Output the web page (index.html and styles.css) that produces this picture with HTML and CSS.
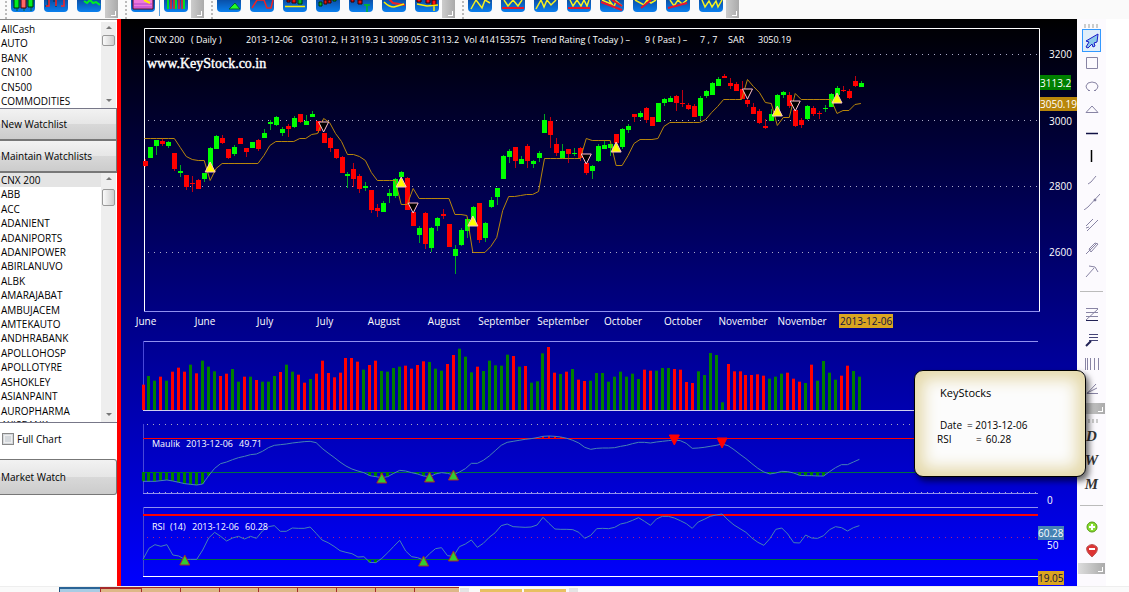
FILE: index.html
```html
<!DOCTYPE html>
<html lang="en">
<head>
    <meta charset="UTF-8">
    <meta name="viewport" content="width=device-width, initial-scale=1.0">
    <title>KeyStocks</title>
    <link rel="stylesheet" href="styles.css">
</head>
<body>
    <!-- Top toolbar -->
    <header class="toolbar">
        <div class="tool-group first">
            <button class="tool" aria-label="Candles"><svg viewBox="0 12 24 12"><path d="M6 12v11M13 12v11M20 12v11" stroke="#063"/><path fill="#0e2" stroke="#030" d="M3 11h5v9H3zM17 11h5v8h-5z"/><path fill="#f66" stroke="#400" d="M10 11h5v9h-5z"/></svg></button>
            <button class="tool" aria-label="Bars"><svg viewBox="0 12 24 12"><path d="M4 12v6M1 18h3M12 12v7M12 13h-3" stroke="#034" fill="none"/><path d="M5 12v6h-3M12 12v6M20 12v6h-3" stroke="#f22" stroke-width="1.500" fill="none"/></svg></button>
            <button class="tool" aria-label="Line"><svg viewBox="0 12 24 12"><path d="M7 13l3 2 3-3 3 3 3-1 4 3" stroke="#0e2" stroke-width="2" fill="none"/></svg></button>
        </div>
        <span class="overflow"></span>
        <div class="tool-group">
            <button class="tool" aria-label="Template"><svg viewBox="0 12 24 12"><path fill="#e7d" stroke="#502" d="M2 11h20v10H2z"/><path d="M3 16h18M3 19h18" stroke="#a4c"/><path d="M13 12l6 3" stroke="#fe0" stroke-width="2"/></svg></button>
            <span class="divider"></span>
            <button class="tool" aria-label="Volume"><svg viewBox="0 12 24 12"><path d="M4 12v9M12 12v9M20 12v9" stroke="#0d2" stroke-width="2"/><path d="M7 12v9M10 12v9M15 12v9M18 12v9" stroke="#e22" stroke-width="1.500"/></svg></button>
        </div>
        <span class="overflow"></span>
        <div class="tool-group">
            <button class="tool" aria-label="Up signal"><svg viewBox="0 12 24 12"><path fill="#2f2" stroke="#063" d="M12 21l6-6 5 6z"/></svg></button>
            <button class="tool" aria-label="Zigzag"><svg viewBox="0 12 24 12"><path d="M2 20l5-8h7l3 8h4l2-8" stroke="#e22" stroke-width="1.500" fill="none"/></svg></button>
            <button class="tool" aria-label="Support"><svg viewBox="0 12 24 12"><path fill="#d11" stroke="#300" d="M4 12h3v2H4zM9 11h4v4H9z"/><path fill="#0b2" stroke="#030" d="M15 11h4v5h-4z"/><path d="M2 18.500h20" stroke="#fe0" stroke-width="1.500"/></svg></button>
            <button class="tool" aria-label="Pattern"><svg viewBox="0 12 24 12"><path fill="#0b2" stroke="#030" d="M3 14h3v4H3zM17 11h3v2h-3z"/><path fill="#d11" stroke="#300" d="M8 12h3v4H8zM12 12h3v3h-3z"/></svg></button>
            <button class="tool" aria-label="Breakout"><svg viewBox="0 12 24 12"><path fill="#d11" stroke="#300" d="M2 11h3v3H2zM9 12h4v4H9z"/><path d="M15 17h6M18 16v8" stroke="#0b2" stroke-width="1.500"/></svg></button>
            <button class="tool" aria-label="Cup"><svg viewBox="0 12 24 12"><path d="M7 11l4 4 12 2" stroke="#e22" stroke-width="2" fill="none"/><path d="M2 14q5 5 10 5l10-3" stroke="#fe0" stroke-width="1.500" fill="none"/></svg></button>
            <button class="tool" aria-label="Handle"><svg viewBox="0 12 24 12"><path fill="#f11" stroke="#300" d="M2 11h4v3H2zM11 11h4v4h-4zM17 12h4v5h-4z"/><path d="M2 16l10 2 11-1M19 17v6" stroke="#fe0" stroke-width="1.500" fill="none"/></svg></button>
        </div>
        <span class="overflow"></span>
        <div class="tool-group">
            <button class="tool" aria-label="Wave"><svg viewBox="0 12 24 12"><path d="M3 21l5-9 6 8 3-8 5 3" class="wave"/></svg></button>
            <button class="tool" aria-label="Wave base"><svg viewBox="0 12 24 12"><path d="M3 12l4 6 5-6 5 6 4-6" class="wave"/><path d="M1 20h22" class="trend"/></svg></button>
            <button class="tool" aria-label="Double wave"><svg viewBox="0 12 24 12"><path d="M2 21l5-9 3 7 3-7 4 5 5-5" class="wave"/></svg></button>
            <button class="tool" aria-label="Triple base"><svg viewBox="0 12 24 12"><path d="M3 12l3 6 4-6 4 6 3-6 3 6 2-6" class="wave"/><path d="M1 20h22" class="trend"/></svg></button>
            <button class="tool" aria-label="Down channel"><svg viewBox="0 12 24 12"><path d="M2 12l9 4M9 12l5 7 2-6 6 5" class="wave"/><path d="M1 14l21 8M12 12l10 6" class="trend"/></svg></button>
            <button class="tool" aria-label="Up channel"><svg viewBox="0 12 24 12"><path d="M2 12l9 5 3-5 4 3 5-3" class="wave"/><path d="M8 20l10-8" class="trend"/></svg></button>
            <button class="tool" aria-label="Rising wedge"><svg viewBox="0 12 24 12"><path d="M4 12l4 6 4-6 4 4 5-4" class="wave"/><path d="M2 20l19-5" class="trend"/></svg></button>
            <button class="tool" aria-label="Cycle"><svg viewBox="0 12 24 12"><path d="M3 12l3 7 4-6 3 6 4-6 2 6 4-7" class="wave"/></svg></button>
        </div>
        <span class="overflow"></span>
    </header>

    <main class="workspace">
        <!-- Watchlists -->
        <aside class="sidebar">
            <div class="listbox short">
                <ul>
                    <li>AllCash</li><li>AUTO</li><li>BANK</li><li>CN100</li><li>CN500</li><li>COMMODITIES</li>
                </ul>
                <div class="scroll"><span class="up"></span><span class="thumb"></span><span class="down"></span></div>
            </div>
            <button class="side-btn">New Watchlist</button>
            <button class="side-btn">Maintain Watchlists</button>
            <div class="listbox tall">
                <ul>
                    <li class="selected">CNX 200</li><li>ABB</li><li>ACC</li><li>ADANIENT</li><li>ADANIPORTS</li><li>ADANIPOWER</li>
                    <li>ABIRLANUVO</li><li>ALBK</li><li>AMARAJABAT</li><li>AMBUJACEM</li><li>AMTEKAUTO</li><li>ANDHRABANK</li>
                    <li>APOLLOHOSP</li><li>APOLLOTYRE</li><li>ASHOKLEY</li><li>ASIANPAINT</li><li>AUROPHARMA</li><li>AXISBANK</li>
                </ul>
                <div class="scroll"><span class="up"></span><span class="thumb"></span><span class="down"></span></div>
            </div>
            <label class="full-chart"><input type="checkbox"> Full Chart</label>
            <button class="side-btn market">Market Watch</button>
        </aside>

        <!-- Chart -->
        <section class="chart-area">
            <svg id="chart" class="chart" viewBox="121 19 956 567" role="img" aria-label="CNX 200 daily chart">
                <g class="grid">
                    <path d="M148 54.500H1038M148 120.500H1038M148 186.500H1038M148 252.500H1038"/>
                    <path d="M147 424.500H1038M147 492.500H1038"/>
                    <path class="mid" d="M147 537.500H1038"/>
                </g>
                <path class="frame" d="M144.500 311.500V28.500H1039.500V311.500"/>
                <path class="edge" d="M144 311.500H1040M143 341.500H1038M143 493.500H1038M143 507.500H1038"/>
                <path class="side" d="M143.500 341V410M143.500 424V493M143.500 507V576"/>
                <path class="base" d="M143 410.500H1038"/>
                <path class="frame" d="M143 576.500H1038"/>
                <path class="low" d="M143 472.500H1038M143 559.500H1038"/>
                <path class="high" d="M143 438.500H1038"/>
                <path class="high thick" d="M143 515H1038"/>
                <g id="plot"></g>

                <g class="info">
                    <text x="149" y="43">CNX 200</text>
                    <text x="191" y="43">( Daily )</text>
                    <text x="246" y="43">2013-12-06</text>
                    <text x="301" y="43">O3101.2,</text>
                    <text x="341" y="43">H 3119.3</text>
                    <text x="381" y="43">L 3099.05</text>
                    <text x="423" y="43">C 3113.2</text>
                    <text x="464" y="43">Vol 414153575</text>
                    <text x="532" y="43">Trend Rating ( Today ) –</text>
                    <text x="645" y="43">9 ( Past ) –</text>
                    <text x="700" y="43">7 , 7</text>
                    <text x="728" y="43">SAR</text>
                    <text x="758" y="43">3050.19</text>
                    <text x="152" y="447">Maulik</text>
                    <text x="186" y="447">2013-12-06</text>
                    <text x="239" y="447">49.71</text>
                    <text x="152" y="530">RSI</text>
                    <text x="170" y="530">(14)</text>
                    <text x="192" y="530">2013-12-06</text>
                    <text x="245" y="530">60.28</text>
                </g>
                <text class="site" x="147" y="68">www.KeyStock.co.in</text>

                <g id="months" class="axis months"></g>
                <rect x="839" y="314" width="54" height="14" fill="#daa520"/>
                <text class="axis dark" x="840" y="325">2013-12-06</text>

                <g class="axis">
                    <text x="1049" y="58">3200</text>
                    <text x="1049" y="125">3000</text>
                    <text x="1049" y="190">2800</text>
                    <text x="1049" y="256">2600</text>
                    <text x="1047" y="504">0</text>
                    <text x="1047" y="549">50</text>
                </g>
                <rect x="1040" y="75" width="31" height="15" fill="#008000"/>
                <text class="axis" x="1040" y="87">3113.2</text>
                <rect x="1040" y="97" width="37" height="14" fill="#b8860b"/>
                <text class="axis" x="1040" y="108">3050.19</text>
                <rect x="1038" y="526" width="26" height="14" fill="#4682b4"/>
                <text class="axis" x="1038" y="537">60.28</text>
                <rect x="1038" y="571" width="26" height="14" fill="#daa520"/>
                <text class="axis dark" x="1038" y="582">19.05</text>
            </svg>
        </section>

        <!-- Drawing tools -->
        <nav class="draw-tools" aria-label="Drawing tools">
            <span class="grip"></span>
            <button class="draw active" aria-label="Select"><svg viewBox="0 0 16 16"><path fill="#8ac8ea" stroke="#1a1ac8" d="M14 1L2 8l3 1-3 5 2 1 4-4 1 3 2-1-1-3 3-1z"/></svg></button>
            <button class="draw" aria-label="Rectangle"><svg viewBox="0 0 16 16"><path d="M2.500 1.500h11v11h-11z"/></svg></button>
            <button class="draw" aria-label="Ellipse"><svg viewBox="0 0 16 16"><path d="M5 11.500Q2 10 2 7q1-4 6-4t6 4q0 3-3 4.500M4 11.500h2M10 11.500h2"/></svg></button>
            <button class="draw" aria-label="Triangle"><svg viewBox="0 0 16 16"><path d="M2 10.500h12L8 4z"/></svg></button>
            <button class="draw" aria-label="Horizontal line"><svg viewBox="0 0 16 16"><path stroke="#114" stroke-width="1.500" d="M2 8.500h12"/></svg></button>
            <button class="draw" aria-label="Vertical line"><svg viewBox="0 0 16 16"><path stroke="#000" stroke-width="1.500" d="M7.500 2v12"/></svg></button>
            <button class="draw" aria-label="Segment"><svg viewBox="0 0 16 16"><path d="M4 13l3-2 5-6"/></svg></button>
            <button class="draw" aria-label="Trend line"><svg viewBox="0 0 16 16"><path d="M0 16l4-3L16 0"/><circle cx="11" cy="6" r="1" fill="#446"/></svg></button>
            <button class="draw" aria-label="Parallel lines"><svg viewBox="0 0 16 16"><path d="M2 9l7-7M3 14L14 3M2 11l3-1"/></svg></button>
            <button class="draw" aria-label="Channel"><svg viewBox="0 0 16 16"><path d="M2 14L13 3M5 9l6-6M7 12l7-8M5 9l2 3M11 3l3 1"/></svg></button>
            <button class="draw" aria-label="Pitchfork"><svg viewBox="0 0 16 16"><path d="M2 14l8-9M5 3l6 1 3 5"/></svg></button>
            <hr>
            <button class="draw wide" aria-label="Retracement"><svg viewBox="0 0 16 16"><path d="M2 2.500h12M2 6.500h12M2 10.500h12M2 14L14 3"/><path stroke="#225" d="M2 14.500h12"/></svg></button>
            <button class="draw wide" aria-label="Fan levels"><svg viewBox="0 0 16 16"><path stroke="#447" d="M5 3.500h9M5 6.500h9M5 9.500h9"/><path stroke="#225" stroke-width="2" d="M2 15l5-5"/></svg></button>
            <button class="draw wide" aria-label="Time zones"><svg viewBox="0 0 16 16"><path d="M1.500 2v12M3.500 2v12M6.500 2v12M10.500 2v12M14.500 2v12"/></svg></button>
            <button class="draw wide" aria-label="Gann fan"><svg viewBox="0 0 16 16"><path d="M14 12.500H3L12 3M3 12l10-5"/></svg></button>
            <span class="overflow flat"></span>
            <span class="grip"></span>
            <button class="draw period">D</button>
            <button class="draw period">W</button>
            <button class="draw period">M</button>
            <hr>
            <button class="draw" aria-label="Zoom in"><svg viewBox="0 0 16 16"><circle cx="8" cy="8" r="5" fill="#8d3" stroke="#591"/><path stroke="#fff" stroke-width="2" d="M5 8h6M8 5v6"/></svg></button>
            <button class="draw" aria-label="Zoom out"><svg viewBox="0 0 16 16"><path fill="#d33" stroke="#b55" d="M3 5q5-5 10 0 2 4-5 10Q1 9 3 5z"/><path stroke="#fff" stroke-width="2" d="M5 7h6"/></svg></button>
            <span class="overflow flat"></span>
        </nav>

        <div class="tooltip">
            <h2>KeyStocks</h2>
            <dl>
                <dt>Date</dt><dd>= 2013-12-06</dd>
                <dt class="rsi">RSI</dt><dd><span>=</span>60.28</dd>
            </dl>
        </div>
    </main>

    <!-- Bottom tabs -->
    <footer class="tabs">
        <span class="tab blue"></span>
        <span class="tab current"></span>
        <span class="tab"></span>
        <span class="tab"></span>
        <span class="tab"></span>
        <span class="tab"></span>
        <span class="tab"></span>
        <span class="tab"></span>
        <span class="tab"></span>
        <span class="tab last"></span>
        <span class="stub"></span>
        <span class="gold"></span>
        <span class="gold"></span>
        <span class="stub"></span>
    </footer>

    <script src="script.js"></script>
</body>
</html>
```
FILE: styles.css
```css
* {
    margin: 0;
    padding: 0;
    box-sizing: border-box;
}

body {
    font-family: "Open Sans", "Noto Sans", sans-serif;
    font-size: 10px;
    color: #000;
    background: #fff;
    min-height: 100vh;
    display: flex;
    flex-direction: column;
    overflow: hidden;
}

button {
    font: inherit;
    border: none;
    background: none;
    cursor: pointer;
}

/* Top toolbar */
.toolbar {
    height: 19px;
    display: flex;
    background: #fafafa;
}

.tool-group {
    display: flex;
    gap: 9px;
    padding: 0 3px 0 11px;
    background: radial-gradient(#bbb 1px, transparent 1px) 4px 0 / 4px 4px repeat-y;
}

.tool {
    width: 24px;
    height: 12px;
    border-radius: 0 0 4px 4px;
    background: linear-gradient(#0a50a8, #0a80ee);
    overflow: hidden;
}

.tool svg {
    display: block;
    width: 24px;
    height: 12px;
}

.divider {
    width: 1px;
    height: 16px;
    margin: 0 -5px;
    background: #58a0e0;
}

.wave {
    fill: none;
    stroke: #f4f020;
    stroke-width: 1.5;
}

.trend {
    fill: none;
    stroke: #e8142c;
    stroke-width: 2;
}

.overflow {
    width: 13px;
    height: 18px;
    margin-right: 2px;
    background: linear-gradient(90deg, #ccc, #aaa);
    position: relative;
}

.overflow::after {
    content: "";
    position: absolute;
    right: 2px;
    bottom: 2px;
    width: 4px;
    height: 4px;
    border-right: 1px solid #fff;
    border-bottom: 1px solid #fff;
}

.tool-group.first + .overflow {
    margin-left: 1px;
}

/* Workspace */
.workspace {
    display: flex;
    position: relative;
    padding-right: 23px;
}

.sidebar {
    flex: none;
    width: 121px;
    border-right: 4px solid #f00;
    display: flex;
    flex-direction: column;
}

.listbox {
    display: flex;
    justify-content: space-between;
    overflow: hidden;
    border-bottom: 1px solid #778;
}

.listbox.short {
    height: 90px;
    padding-top: 2px;
    border-top: 1px solid #888;
}

.listbox.tall {
    height: 250px;
}

.listbox ul {
    list-style: none;
    flex: 1;
    display: flex;
    flex-direction: column;
    justify-content: space-between;
}

.short ul {
    height: 86px;
}

.tall ul {
    height: 259px;
}

.listbox li {
    line-height: 14px;
    padding-left: 1px;
}

.listbox li.selected {
    background: #e4e4e4;
}

.scroll {
    width: 15px;
    margin-right: 1px;
    background: #eee;
    display: flex;
    flex-direction: column;
    align-items: center;
}

.up,
.down {
    border: 3px solid transparent;
}

.up {
    border-top: none;
    border-bottom-color: #777;
    margin: 4px 0 6px;
}

.down {
    border-bottom: none;
    border-top-color: #777;
    margin: auto 0 6px;
}

.thumb {
    width: 13px;
    height: 11px;
    border: 1px solid #999;
    border-radius: 2px;
    background: linear-gradient(90deg, #fafafa, #ccc);
}

.tall .thumb {
    height: 17px;
    margin-top: 3px;
}

.side-btn {
    height: 32px;
    padding: 0 1px;
    text-align: left;
    border: 1px solid #777;
    border-width: 0 1px 2px 0;
    background: linear-gradient(#f2f2f2, #e6e6e6 50%, #d8d8d8 51%, #ccc);
}

.market {
    height: 36px;
    border-width: 1px 1px 1px 0;
    border-radius: 0 3px 3px 0;
}

.full-chart {
    height: 36px;
    display: flex;
    align-items: center;
    gap: 3px;
    padding: 0 0 4px 2px;
}

.full-chart input {
    appearance: none;
    width: 12px;
    height: 12px;
    border: 1px solid #888;
    outline: 1px solid #eee;
    outline-offset: -3px;
    background: #d4d8dc;
}

/* Chart */
.chart-area {
    flex: 1;
    background: linear-gradient(#000, #0000ff);
}

.chart {
    display: block;
    width: 100%;
}

.chart path {
    fill: none;
}

.grid path {
    stroke: #aaaac8;
    stroke-dasharray: 1 5;
}

.grid .mid {
    stroke: #b02080;
}

.frame {
    stroke: #fff;
}

.edge {
    stroke: #9090f0;
}

.side {
    stroke: #4848d8;
}

.base {
    stroke: #d0d0f0;
}

.low {
    stroke: #007040;
}

.high {
    stroke: #f00;
}

.thick {
    stroke-width: 2;
}

.sar {
    fill: none;
    stroke: #b8860b;
}

.study {
    fill: none;
    stroke: #4682b4;
}

.buy {
    fill: #ff0;
    stroke: #ffc0cb;
}

.sell {
    fill: #000;
    stroke: #ffc0cb;
}

.signal-up {
    fill: #32cd32;
    stroke: #a52a2a;
}

.signal-down {
    fill: #f00;
    stroke: #f00;
}

.info {
    font-size: 9px;
    fill: #fff;
}

.site {
    font-family: "Liberation Serif", serif;
    font-size: 14px;
    fill: #fff;
    stroke: #fff;
    stroke-width: 0.4;
}

.axis {
    font-size: 10px;
    fill: #fff;
}

.months {
    text-anchor: middle;
}

.axis.dark {
    fill: #101040;
}

/* Drawing tools */
.draw-tools {
    flex: none;
    width: 29px;
    background: #fcfafe;
    display: flex;
    flex-direction: column;
    align-items: center;
}

.grip {
    width: 16px;
    height: 4px;
    margin: 5px 0 1px;
    background: repeating-linear-gradient(90deg, #ccc 0 2px, transparent 2px 4px);
}

.draw {
    width: 19px;
    height: 23px;
    display: flex;
    align-items: center;
    justify-content: center;
}

.draw.active {
    border: 1px solid #39f;
    background: #e0eefa;
}

.draw.wide {
    height: 25px;
}

.draw svg {
    width: 16px;
    height: 16px;
    fill: none;
    stroke: #8884a4;
}

.draw-tools hr {
    width: 23px;
    border: none;
    border-top: 1px solid #bbb;
    margin: 9px 0;
}

.overflow.flat {
    width: 27px;
    height: 11px;
    margin: 2px 0 0;
    background: linear-gradient(90deg, #ddd, #aaa);
}

.period {
    height: 24px;
    font: italic bold 15px "Liberation Serif", serif;
    color: #333;
}

/* Tooltip */
.tooltip {
    position: absolute;
    top: 351px;
    right: 43px;
    width: 172px;
    height: 107px;
    padding: 14px 22px;
    border: 1px solid #000;
    border-radius: 9px;
    background: #fcfcfc;
    box-shadow: inset 0 0 16px 8px #e4d8a8, 3px 4px 6px rgba(0, 0, 0, 0.6);
}

.tooltip h2 {
    font-size: 11px;
    font-weight: normal;
    line-height: 16px;
    margin: 0 0 17px 3px;
}

.tooltip dl {
    display: grid;
    grid-template-columns: 30px 1fr;
    font-size: 10px;
    line-height: 14px;
}

.tooltip dt {
    padding-left: 3px;
}

.tooltip dt.rsi {
    padding: 0;
}

.tooltip dd span {
    padding: 0 4px 0 9px;
}

/* Bottom tabs */
.tabs {
    height: 6px;
    display: flex;
    padding-left: 59px;
    border-top: 1px solid #eee;
    background: #fafafa;
}

.tab {
    width: 39px;
    background: #deb887;
    border: 1px solid #a52a2a;
    border-width: 1px 0 0 1px;
}

.tab.blue {
    width: 41px;
    background: #a8cce4;
    border-color: #205080;
    border-top: 2px solid #2a6496;
}

.tab.current {
    width: 41px;
    border-top-width: 2px;
}

.tab.last {
    width: 45px;
}

.stub {
    width: 9px;
    margin: 1px 11px 0 1px;
    background: #e4e4e4;
}

.gold {
    width: 42px;
    margin: 2px 2px 0 0;
    background: #e8c060;
}
```
FILE: script.js
```js
const SVG_NS = 'http://www.w3.org/2000/svg';
const plot = document.getElementById('plot');
const STEP = 5.97;

// [up, high, top, bottom, low]
const candles = [
    [0,159,161,166,167],[1,147,147,158,158],[1,140,140,146,155],[0,138,141,144,146],[1,141,142,146,148],
    [0,153,153,169,171],[1,165,171,173,177],[0,175,175,187,190],[0,176,183,184,192],[0,179,180,189,189],
    [1,173,173,179,182],[1,147,148,170,170],[1,135,136,149,149],[0,135,138,143,144],[0,149,149,158,159],
    [1,145,147,154,156],[0,138,138,144,144],[0,148,148,152,157],[1,142,142,148,148],[0,139,140,149,151],
    [1,129,133,138,138],[1,120,122,124,130],[1,116,117,125,126],[1,127,129,133,136],[0,124,126,129,137],
    [1,116,118,127,128],[0,114,114,122,123],[1,115,121,125,125],[1,111,114,117,117],[0,121,121,131,133],
    [0,133,133,143,143],[0,137,138,148,152],[0,149,149,158,159],[0,156,157,173,173],[1,172,174,176,188],
    [0,163,169,179,187],[0,174,176,189,193],[1,182,186,188,191],[0,190,190,210,213],[0,204,208,211,217],
    [1,201,203,212,212],[1,189,193,196,203],[1,178,179,196,198],[1,171,172,177,177],[0,177,178,210,210],
    [0,212,212,226,226],[1,226,228,235,243],[0,212,213,244,249],[1,227,228,248,252],[1,217,218,226,231],
    [0,209,214,216,219],[0,224,224,247,247],[1,245,249,256,274],[1,228,230,245,246],[1,217,219,231,238],
    [1,206,207,224,224],[0,203,203,240,243],[1,222,223,238,242],[1,197,200,207,208],[1,188,188,197,205],
    [1,155,156,179,179],[1,149,151,157,163],[0,147,147,161,168],[1,156,159,164,164],[0,144,146,161,168],
    [1,160,161,164,168],[1,151,153,158,162],[1,114,120,133,133],[0,117,121,135,148],[0,138,144,153,156],
    [1,144,151,158,159],[0,149,149,154,163],[1,148,153,154,156],[0,147,148,158,161],[0,163,163,173,175],
    [1,165,166,171,179],[1,144,146,161,162],[1,140,145,149,149],[1,144,144,148,156],[0,134,134,143,143],
    [1,128,129,147,149],[1,124,126,130,133],[0,114,114,117,122],[1,111,113,117,118],[0,107,108,120,123],
    [0,117,117,126,126],[1,103,103,122,122],[1,98,99,103,106],[1,96,98,102,102],[0,95,96,103,111],
    [0,90,103,104,107],[0,103,105,109,110],[0,104,106,117,117],[1,96,98,116,120],[1,90,91,96,98],
    [1,82,83,95,95],[1,77,79,86,86],[0,74,76,78,78],[0,78,83,86,89],[0,82,84,91,91],
    [0,81,89,99,99],[0,99,100,104,107],[0,103,107,114,114],[0,109,111,123,124],[0,119,126,128,129],
    [1,109,114,121,121],[1,94,95,110,110],[1,91,92,95,98],[0,92,95,106,108],[0,110,110,126,127],
    [0,118,120,125,128],[1,105,106,119,120],[0,106,108,114,116],[0,111,113,114,119],[1,105,108,109,112],
    [1,93,94,107,107],[1,86,88,95,95],[0,86,90,91,92],[0,89,91,98,99],[0,76,81,86,87],[1,81,83,87,87]
];

const sar = [
    138,138,138,138,138,138,147,156,159,160,160,180,168,163,163,163,163,163,163,163,
    155,145,141,141,141,141,138,138,134,133,118,122,133,141,154,154,156,160,172,180,
    180,180,180,204,204,188,198,198,198,198,198,198,214,214,215,252,252,252,246,237,
    210,196,196,195,194,194,191,158,158,158,158,158,158,158,138,140,140,140,140,165,
    165,155,143,139,139,139,138,126,122,122,122,122,122,122,119,112,106,99,99,99,
    99,79,86,92,102,103,125,117,117,93,99,99,99,99,99,99,113,110,110,104,103
];

// Negative values are down days
const volume = [
    -76,102,88,-100,88,-115,-127,-115,136,-110,148,130,116,-102,-109,123,85,-100,100,-90,
    85,85,102,-114,136,115,-106,-82,93,-109,-148,-111,-98,-112,-156,-156,-145,121,-135,-148,
    117,115,126,130,-133,-124,-135,-146,144,124,118,-138,-165,184,160,113,-130,117,148,134,
    133,166,-162,130,-132,82,86,170,-189,-112,108,-115,123,-91,-87,88,111,111,85,100,
    115,100,109,93,-121,-118,118,126,126,-123,-121,-84,-81,116,105,171,165,23,-138,-116,
    -116,-105,-105,-107,-103,94,100,109,-112,-94,-85,81,-136,88,147,112,91,-103,-133,117,100
];

const maulik = [
    514,514,514,512,510,513,517,521,523,525,522,497,475,461,456,449,443,439,434,432,
    424,413,406,404,402,399,397,395,394,398,415,429,442,456,468,477,483,488,497,500,
    503,500,490,481,483,488,492,498,500,492,488,490,495,486,476,460,460,451,438,422,
    406,397,394,391,388,386,383,379,378,379,381,385,391,399,412,418,415,414,414,413,
    409,406,401,397,397,399,396,394,392,390,392,400,415,414,412,409,406,402,407,419,
    433,446,461,475,486,492,489,484,485,489,496,497,497,498,498,485,473,464,464,456,448
];

const rsi = [
    748,715,704,709,704,735,738,748,748,748,720,684,667,679,693,684,679,687,679,685,
    663,650,647,664,664,654,655,655,651,670,690,698,709,722,727,731,741,740,757,758,
    745,728,709,691,723,740,743,750,731,716,713,737,739,710,702,690,712,700,682,668,
    647,642,650,651,652,651,645,622,640,657,658,658,659,667,685,676,656,655,656,652,
    642,638,631,623,634,646,627,619,619,624,632,641,655,636,628,619,615,612,630,645,
    656,667,684,697,706,686,658,654,672,698,699,675,684,685,677,659,650,653,663,653,647
];

function add(tag, attrs, parent = plot) {
    const el = document.createElementNS(SVG_NS, tag);
    for (const key in attrs) el.setAttribute(key, attrs[key]);
    parent.appendChild(el);
    return el;
}

const priceX = i => 144.5 + STEP * i;
const studyX = i => 143 + STEP * i;
const studyY = v => 310 + v / 3;

function line(values, x, y, cls) {
    add('polyline', { class: cls, points: values.map((v, i) => `${x(i)},${y(v)}`).join(' ') });
}

// dir 1 points up, -1 points down
function triangle(x, y, dir, cls) {
    const tip = y - 5 * dir;
    const base = y + 5 * dir;
    add('polygon', { class: cls, points: `${x},${tip} ${x - 5},${base} ${x + 5},${base}` });
}

function bar(x, top, height, color, width = 3) {
    add('rect', { x: Math.round(x - width / 2), y: top, width, height, fill: color });
}

// Price
candles.forEach(([up, high, top, bottom, low], i) => {
    const x = Math.round(priceX(i));
    const color = up ? '#00ff00' : '#ff0000';
    bar(x, high, low - high, up ? '#00a820' : '#c00010', 1);
    bar(x, top, Math.max(bottom - top, 1), color, 5);
});
line(sar, priceX, v => v + 0.5, 'sar');
[[11, 167], [43, 182], [55, 221], [79, 147], [106, 111], [116, 98]].forEach(([i, y]) => triangle(priceX(i), y, 1, 'buy'));
[[30, 127], [45, 208], [74, 159], [101, 94], [109, 106]].forEach(([i, y]) => triangle(priceX(i), y, -1, 'sell'));

// Volume
volume.forEach((v, i) => {
    const height = Math.abs(v) / 3;
    bar(studyX(i), 410 - height, height, v > 0 ? '#008000' : '#ff0000');
});

// Maulik
maulik.forEach((v, i) => {
    if (v > 488) bar(studyX(i), 472, studyY(v) - 472, '#008000');
    if (v < 384) bar(studyX(i), studyY(v), 438 - studyY(v), '#ff0000', 2);
});
line(maulik, studyX, studyY, 'study');
[[40, 478], [48, 477], [52, 475]].forEach(([i, y]) => triangle(studyX(i), y, 1, 'signal-up'));
[[89, 440], [97, 443]].forEach(([i, y]) => triangle(studyX(i), y, -1, 'signal-down'));

// RSI
rsi.forEach((v, i) => {
    if (v > 752) bar(studyX(i), 560, studyY(v) - 560, '#008000');
});
line(rsi, studyX, studyY, 'study');
[[7, 560], [47, 561], [52, 556]].forEach(([i, y]) => triangle(studyX(i), y, 1, 'signal-up'));

// Month labels, one every ten candles
const months = ['June', 'June', 'July', 'July', 'August', 'August', 'September', 'September', 'October', 'October', 'November', 'November'];
months.forEach((name, i) => {
    add('text', { x: Math.round(priceX(i * 10) + 1), y: 325 }, document.getElementById('months')).textContent = name;
});
```
